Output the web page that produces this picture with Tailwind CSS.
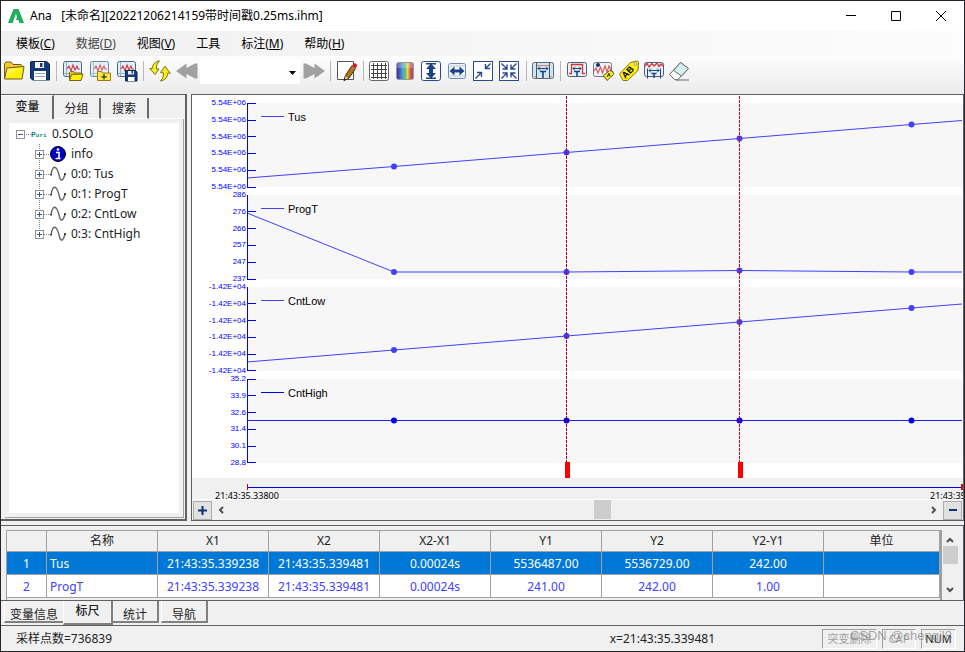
<!DOCTYPE html>
<html lang="zh-CN">
<head>
    <meta charset="UTF-8">
    <meta name="viewport" content="width=device-width, initial-scale=1.0">
    <title>Ana</title>
    <script src="https://cdn.jsdelivr.net/npm/@tailwindcss/browser@4"></script>
</head>
<body class="min-h-screen flex flex-col bg-[#f0f0f0] border border-[#24242a] text-[#222] text-xs font-['Noto_Sans','Noto_Sans_CJK_SC',sans-serif] overflow-x-hidden">

    <!-- Shared icon parts -->
    <svg width="0" height="0" class="absolute">
        <defs>
            <linearGradient id="rainbow">
                <stop offset="0" stop-color="#303080"/>
                <stop offset=".2" stop-color="#5058d0"/>
                <stop offset=".38" stop-color="#40b0c0"/>
                <stop offset=".52" stop-color="#60c070"/>
                <stop offset=".65" stop-color="#e8d850"/>
                <stop offset=".82" stop-color="#e05040"/>
                <stop offset="1" stop-color="#7050b0"/>
            </linearGradient>
            <linearGradient id="folderFill" x1="0" y1="0" x2="1" y2="1">
                <stop offset="0" stop-color="#fff9a0"/>
                <stop offset=".6" stop-color="#fff000"/>
            </linearGradient>
            <g id="miniChart">
                <rect x="1.5" y="1.5" width="18" height="15" rx="2" fill="#dff0f8" stroke="#4a6478"/>
                <path d="M4.500 2v14M2 13.500h17" stroke="#8fb4c8" fill="none"/>
                <path d="M5 9l2-3 2 5 2-6 2 5 2-4 1 3h2" stroke="#d04050" stroke-width="1.200" fill="none"/>
            </g>
            <g id="wave">
                <path d="M1 11C2 4 4 2 6 4s2.500 5 3.500 9S13 18 15 10" fill="none" stroke="#666" stroke-width="1.400"/>
                <path d="M1 10v1.500M15 9v2" stroke="#111" stroke-width="1.400"/>
            </g>
        </defs>
    </svg>

    <!-- Title bar -->
    <header class="h-[30px] shrink-0 bg-white flex items-center pl-[7px] pr-px text-black">
        <svg width="16" height="16" viewBox="0 0 16 16" class="mr-1.5">
            <path fill="#1fae5c" d="M5.500 1h5L16 15h-4.500l-1.200-3H8l1-2.500L8 5.500 5.500 12.500l-.6 2.500H0z"/>
        </svg>
        <h1>Ana &nbsp; [未命名][20221206214159带时间戳0.25ms.ihm]</h1>
        <div class="ml-auto flex h-full">
            <button aria-label="最小化" class="w-[45px] grid place-items-center"><svg width="10" height="10" stroke="#000"><path d="M0 4.500h10"/></svg></button>
            <button aria-label="最大化" class="w-[45px] grid place-items-center"><svg width="10" height="10" fill="none" stroke="#000"><path d="M.5.5h9v9h-9z"/></svg></button>
            <button aria-label="关闭" class="w-[45px] grid place-items-center"><svg width="10" height="10" stroke="#000"><path d="M0 0l10 10M10 0L0 10"/></svg></button>
        </div>
    </header>

    <!-- Menu -->
    <nav class="h-[25px] shrink-0 flex items-center gap-[21px] pl-[15px] text-black bg-linear-to-r from-[#f0f0f0] to-[#fcfcfc]">
        <button>模板(<u>C</u>)</button>
        <button class="text-[#444]">数据(<u>D</u>)</button>
        <button>视图(<u>V</u>)</button>
        <button>工具</button>
        <button>标注(<u>M</u>)</button>
        <button>帮助(<u>H</u>)</button>
    </nav>

    <!-- Toolbar -->
    <div class="h-[38px] shrink-0 flex items-start pt-[3px] bg-linear-to-b from-[#fdfdfd] to-[#ebebeb]">
        <button aria-label="打开" class="w-[25px] h-6 grid place-items-center">
            <svg width="22" height="20" viewBox="0 0 22 20" stroke="#6b5a20" stroke-linejoin="round">
                <path d="M1.500 17V2.500L3 1h5l2 2.500h8l1 1V8" fill="#f6c828"/>
                <path d="M1.500 18L4 7 21 5.500 19 18z" fill="url(#folderFill)"/>
            </svg>
        </button>
        <button aria-label="保存" class="w-[27px] h-6 grid place-items-center">
            <svg width="20" height="20" viewBox="0 0 20 20">
                <path d="M1 .5h15.500L19.500 3v16h-17L.5 17V1z" fill="#143a78" stroke="#0c2450"/>
                <path d="M5 1h9v6H5z" fill="#f4f4f4"/><path d="M10 2h2.500v4H10z" fill="#143a78"/>
                <path d="M4 10h12v9H4z" fill="#fff"/><path d="M5 12.500h10M5 15.500h10" stroke="#9aa" />
            </svg>
        </button>
        <i class="w-1.5 h-5 mt-0.5 grid justify-center"><i class="w-px bg-[#b8b8b8]"></i></i>
        <button aria-label="打开图表" class="w-[27px] h-6 grid place-items-center">
            <svg width="22" height="22" viewBox="0 0 22 22">
                <use href="#miniChart"/>
                <path d="M7.500 20.500v-8l1-1h3l1 1.500h6v2" fill="#f0c020" stroke="#7a6414"/>
                <path d="M7.500 20.500l2-6 11.500-.5-2 6.500z" fill="#fff000" stroke="#7a6414"/>
            </svg>
        </button>
        <button aria-label="添加图表" class="w-[27px] h-6 grid place-items-center">
            <svg width="22" height="22" viewBox="0 0 22 22">
                <use href="#miniChart" opacity=".8"/>
                <path d="M8.500 20.500v-9h4l1 1.500h8v7.500z" fill="#ffe840" stroke="#a07818"/>
                <path d="M15 14v5.500M12.200 16.800h5.600" stroke="#333" stroke-width="1.300"/>
            </svg>
        </button>
        <button aria-label="保存图表" class="w-[27px] h-6 grid place-items-center">
            <svg width="22" height="22" viewBox="0 0 22 22">
                <use href="#miniChart"/>
                <path d="M9.500 10.500h10l1.500 1.500v9H9.500z" fill="#143a78" stroke="#0c2450"/>
                <path d="M12 11h6v3.500h-6z" fill="#e8eef4"/><path d="M15.500 11h1.500v2.500h-1.500z" fill="#143a78"/>
                <path d="M12 17h6.500v4H12z" fill="#fff"/>
            </svg>
        </button>
        <i class="w-1.5 h-5 mt-0.5 grid justify-center"><i class="w-px bg-[#b8b8b8]"></i></i>
        <button aria-label="刷新" class="w-[27px] h-6 grid place-items-center">
            <svg width="22" height="22" viewBox="0 0 22 22" fill="#ffee10" stroke="#6a6218" stroke-width=".9" stroke-linejoin="round">
                <path d="M10.500 .8C5.500 2 3.500 5 3.300 8.500L.8 8.500 6 14.500 10 9 7.400 9C7.200 6 8 3.500 10.500 .8z"/>
                <path d="M11.500 21c5-1 7.200-3.800 7.200-8l2.600.3L16 6.300 11.500 12.500l2.800.3c.3 3-.3 5.400-2.800 8.200z"/>
            </svg>
        </button>
        <button aria-label="后退" class="w-[27px] h-6 grid place-items-center">
            <svg width="22" height="16" viewBox="0 0 22 16" fill="#a0a0a0"><path d="M0 8L10.500.5v4.500L19 .5h2.500v15H19L10.500 11v4.500z"/></svg>
        </button>
        <div class="relative w-[100px] h-[25px]">
            <select aria-label="视图" class="w-full h-full bg-white appearance-none"></select>
            <svg width="7" height="4" class="absolute right-1 top-3 pointer-events-none"><path d="M0 0h7L3.500 4z"/></svg>
        </div>
        <button aria-label="前进" class="w-[27px] h-6 grid place-items-center">
            <svg width="22" height="16" viewBox="0 0 22 16" fill="#a0a0a0"><path d="M22 8L11.500.5v4.500L3 .5H.5v15H3L11.500 11v4.500z"/></svg>
        </button>
        <i class="w-1.5 h-5 mt-0.5 grid justify-center"><i class="w-px bg-[#b8b8b8]"></i></i>
        <button aria-label="编辑" class="w-[27px] h-6 grid place-items-center">
            <svg width="22" height="22" viewBox="0 0 22 22">
                <path d="M1.500 1.500h16v18h-16z" fill="#fff" stroke="#555"/>
                <path d="M8 20.500l1.500-5L16 5.500l4 2.500-7 10z" fill="#b87818" stroke="#3a2408"/>
                <path d="M8 20.500l1.500-5 3.500 2.500z" fill="#f4dca0" stroke="#3a2408" stroke-width=".6"/>
                <path d="M8 20.500l.7-2 1.300 1z"/>
                <path d="M16 6l4 2.500" stroke="#70a0b0" stroke-width="2"/>
                <circle cx="18.800" cy="5.500" r="2.200" fill="#e81010"/>
            </svg>
        </button>
        <i class="w-1.5 h-5 mt-0.5 grid justify-center"><i class="w-px bg-[#b8b8b8]"></i></i>
        <button aria-label="网格" class="w-[26px] h-6 grid place-items-center">
            <svg width="20" height="20" viewBox="0 0 20 20" fill="none">
                <rect x=".5" y=".5" width="19" height="19" rx="2" fill="#fff" stroke="#666"/>
                <path d="M4.500 2v16M8.500 2v16M12.500 2v16M16.500 2v16M2 4.500h16M2 8.500h16M2 12.500h16M2 16.500h16" stroke="#444"/>
            </svg>
        </button>
        <button aria-label="颜色" class="w-[26px] h-6 grid place-items-center">
            <svg width="18" height="18" viewBox="0 0 18 18">
                <rect x=".5" y=".5" width="17" height="17" rx="2" fill="url(#rainbow)" stroke="#999"/>
                <path d="M1 1h16v5H1z" fill="#fff" opacity=".25"/>
            </svg>
        </button>
        <button aria-label="纵向缩放" class="w-[26px] h-6 grid place-items-center">
            <svg width="20" height="20" viewBox="0 0 20 20">
                <rect x=".5" y=".5" width="19" height="19" rx="2" fill="#fff" stroke="#284890"/>
                <path d="M5 2h10v1.500H5zM5 16.500h10V18H5zM10 2.500l5 5.500h-3v4h3L10 17.500 5 12h3V8H5z" fill="#1c4488"/>
            </svg>
        </button>
        <button aria-label="横向缩放" class="w-[26px] h-6 grid place-items-center">
            <svg width="18" height="18" viewBox="0 0 18 18">
                <rect x=".5" y="1.500" width="17" height="15" rx="2" fill="#fff" stroke="#7088b8"/>
                <path d="M1 2.500h16v3H1zM1 12.500h16v3H1z" fill="#d8e0ee"/>
                <path d="M1.500 9l5-4.500v3h5v-3l5 4.500-5 4.500v-3h-5v3z" fill="#1c4488"/>
            </svg>
        </button>
        <button aria-label="缩小" class="w-[26px] h-6 grid place-items-center">
            <svg width="20" height="20" viewBox="0 0 20 20" fill="none" stroke="#284890">
                <rect x=".5" y=".5" width="19" height="19" fill="#fff"/>
                <path d="M17.500 2.500l-5 5M12.500 3v4.500H17M2.500 17.500l6-6M4 11.500h4.500V16" stroke-width="1.400"/>
            </svg>
        </button>
        <button aria-label="全部适应" class="w-[26px] h-6 grid place-items-center">
            <svg width="20" height="20" viewBox="0 0 20 20" fill="none" stroke="#284890">
                <rect x=".5" y=".5" width="19" height="19" fill="#fff"/>
                <path d="M2.500 2.500l5.500 5.500M8 3.500V8H3.500M17.500 2.500L12 8M12 3.500V8h4.500M2.500 17.500L8 12M3.500 12H8v4.500M17.500 17.500L12 12M16.500 12H12v4.500" stroke-width="1.400"/>
            </svg>
        </button>
        <i class="w-2 h-5 mt-0.5 grid justify-center"><i class="w-px bg-[#b8b8b8]"></i></i>
        <button aria-label="标尺" class="w-[26px] h-6 grid place-items-center">
            <svg width="22" height="20" viewBox="0 0 22 20" fill="none">
                <rect x=".5" y="1.500" width="21" height="16" rx="2" fill="#cfe6ee" stroke="#5a6a78"/>
                <path d="M2 15.500h2.500V4.500h13v11H20" stroke="#e08080"/>
                <path d="M4.500 2v15M17.500 2v15" stroke="#456"/>
                <path d="M6 7.500h10M8 5.500l-2 2 2 2M14 5.500l2 2-2 2" stroke="#1c4488"/>
                <path d="M8 10.500h6M11 10.500V17" stroke="#1c4488" stroke-width="1.600"/>
            </svg>
        </button>
        <i class="w-2 h-5 mt-0.5 grid justify-center"><i class="w-px bg-[#b8b8b8]"></i></i>
        <button aria-label="脉宽" class="w-[26px] h-6 grid place-items-center">
            <svg width="20" height="20" viewBox="0 0 20 20" fill="none">
                <rect x=".5" y="1.500" width="19" height="14" rx="2" fill="#eaf4f8" stroke="#4a6080"/>
                <path d="M2 12.500h2.500V3.500h11v9H18" stroke="#e03030" stroke-width="1.300"/>
                <path d="M6 7.500h8M8 5.500l-2 2 2 2M12 5.500l2 2-2 2" stroke="#1c4488"/>
                <path d="M7 10.500h6M10 10.500v5" stroke="#1c4488" stroke-width="1.600"/>
            </svg>
        </button>
        <button aria-label="标记" class="w-[26px] h-6 grid place-items-center">
            <svg width="22" height="20" viewBox="0 0 22 20" fill="none">
                <rect x="1.500" y="1.500" width="18" height="14" rx="2" fill="#eaf4f8" stroke="#6a7a88"/>
                <path d="M2 10l2-3 2 5 2.500-6 2 6 2.500-7 2 6 2-6 2 4" stroke="#e05050" stroke-width="1.100"/>
                <circle cx="6" cy="4" r="2" fill="#102a80"/>
                <path d="M11.500 14.500l6-5 3.500 1 .5 3-6.500 6z" fill="#ffee10" stroke="#555"/>
                <path d="M15 16l2-4 1 3.500M15.500 14.500l2.500-.5" stroke="#222" stroke-width=".8"/>
            </svg>
        </button>
        <button aria-label="标签" class="w-[26px] h-6 grid place-items-center">
            <svg width="22" height="22" viewBox="0 0 22 22">
                <path d="M1.500 14L12.500 2.500l7-1.500 1 .8-.5 8.700L9.500 20.500H5z" fill="#ffee10" stroke="#807818" stroke-linejoin="round"/>
                <circle cx="17.500" cy="4" r="1.300" fill="#fff" stroke="#777" stroke-width=".7"/>
                <text x="4" y="17" transform="rotate(-45 8 14)" font-size="9" font-weight="700" font-family="Liberation Sans, sans-serif">AB</text>
            </svg>
        </button>
        <button aria-label="测量" class="w-6 h-6 grid place-items-center">
            <svg width="20" height="20" viewBox="0 0 20 20" fill="none">
                <rect x=".5" y="1.500" width="19" height="14" rx="2" fill="#eaf4f8" stroke="#4a6080"/>
                <path d="M1 5l2-2.500L5 6l3-3.500L10 5l3-3 2 3.500L17 3l2 2" stroke="#e03030" stroke-width="1.300"/>
                <path d="M3.500 7.500v10M16.500 7.500v10M5 9.500h10M7 7.500l-2 2 2 2M13 7.500l2 2-2 2" stroke="#1c4488"/>
                <path d="M7.500 12.500h5M10 12.500V17" stroke="#1c4488" stroke-width="1.600"/>
            </svg>
        </button>
        <button aria-label="清除" class="w-[26px] h-6 grid place-items-center">
            <svg width="22" height="20" viewBox="0 0 22 20" stroke="#666" stroke-linejoin="round">
                <path d="M1.500 13.500L12.500 1.500l8 6-11 11.500-3-.5z" fill="#fff"/>
                <path d="M5.500 9.500l7-8 8 6-7 7.500z" fill="#d4eef2"/>
                <path d="M8 19h13" fill="none"/>
            </svg>
        </button>
    </div>

    <!-- Middle: variable tree and plots -->
    <main class="flex-1 flex gap-1">

        <aside class="w-[186px] shrink-0 flex flex-col border-t border-[#606060] border-r-2 border-b-2">
            <div role="tablist" class="flex items-end h-6 text-center">
                <button role="tab" aria-selected="true" class="w-[53px] h-6 pl-0.5 pb-px font-medium border-r-2 border-t border-t-white border-[#696969]">变量</button>
                <button role="tab" class="w-[47px] h-[21px] pt-0.5 border-r-2 border-[#696969] border-b border-b-white">分组</button>
                <button role="tab" class="w-12 h-[21px] pt-0.5 border-r-2 border-[#696969] border-b border-b-white">搜索</button>
                <span class="flex-1 border-b border-white"></span>
            </div>
            <div class="flex-1 flex ml-1 mr-px mb-px border-r border-b border-[#a0a0a0]">
                <ul class="flex-1 m-1 bg-white leading-5 pt-px">
                    <li>
                        <div class="flex items-center h-5 pl-[7px]">
                            <svg width="36" height="20" class="shrink-0">
                                <rect x=".5" y="6.500" width="8" height="8" fill="#fff" stroke="#919191"/><path d="M2 10.500h5" stroke="#3c50a0"/>
                                <path d="M10 10.500h6" stroke="#888" stroke-dasharray="1 1"/>
                                <text x="15" y="13" font-size="8" font-weight="700" fill="#108888" font-family="Liberation Mono, monospace">P<tspan font-size="6">uri</tspan></text>
                            </svg>
                            0.SOLO
                        </div>
                        <ul>
                            <li class="flex items-center h-5 pl-[26px]">
                                <svg width="36" height="20" class="shrink-0">
                                    <path d="M4.500 0v20M9 10.500h6" stroke="#888" stroke-dasharray="1 1"/>
                                    <rect x=".5" y="6.500" width="8" height="8" fill="#fff" stroke="#919191"/><path d="M2 10.500h5M4.500 8v5" stroke="#3c50a0"/>
                                    <circle cx="23" cy="10" r="7.500" fill="#0000c8" stroke="#001"/>
                                    <path d="M21 8.500h3v5.500M20.500 14.500h5" stroke="#fff" stroke-width="1.600" fill="none"/><circle cx="23" cy="5.500" r="1.300" fill="#fff"/>
                                </svg>
                                info
                            </li>
                            <li class="flex items-center h-5 pl-[26px]">
                                <svg width="36" height="20" class="shrink-0">
                                    <path d="M4.500 0v20M9 10.500h6" stroke="#888" stroke-dasharray="1 1"/>
                                    <rect x=".5" y="6.500" width="8" height="8" fill="#fff" stroke="#919191"/><path d="M2 10.500h5M4.500 8v5" stroke="#3c50a0"/>
                                    <use href="#wave" x="15"/>
                                </svg>
                                0:0: Tus
                            </li>
                            <li class="flex items-center h-5 pl-[26px]">
                                <svg width="36" height="20" class="shrink-0">
                                    <path d="M4.500 0v20M9 10.500h6" stroke="#888" stroke-dasharray="1 1"/>
                                    <rect x=".5" y="6.500" width="8" height="8" fill="#fff" stroke="#919191"/><path d="M2 10.500h5M4.500 8v5" stroke="#3c50a0"/>
                                    <use href="#wave" x="15"/>
                                </svg>
                                0:1: ProgT
                            </li>
                            <li class="flex items-center h-5 pl-[26px]">
                                <svg width="36" height="20" class="shrink-0">
                                    <path d="M4.500 0v20M9 10.500h6" stroke="#888" stroke-dasharray="1 1"/>
                                    <rect x=".5" y="6.500" width="8" height="8" fill="#fff" stroke="#919191"/><path d="M2 10.500h5M4.500 8v5" stroke="#3c50a0"/>
                                    <use href="#wave" x="15"/>
                                </svg>
                                0:2: CntLow
                            </li>
                            <li class="flex items-center h-5 pl-[26px]">
                                <svg width="36" height="20" class="shrink-0">
                                    <path d="M4.500 0v10M9 10.500h6" stroke="#888" stroke-dasharray="1 1"/>
                                    <rect x=".5" y="6.500" width="8" height="8" fill="#fff" stroke="#919191"/><path d="M2 10.500h5M4.500 8v5" stroke="#3c50a0"/>
                                    <use href="#wave" x="15"/>
                                </svg>
                                0:3: CntHigh
                            </li>
                        </ul>
                    </li>
                </ul>
            </div>
        </aside>

        <section class="flex-1 min-w-0 flex flex-col border border-[#606060]">
            <!-- Plots -->
            <div class="relative flex-1 bg-white pt-1 pr-px font-['Liberation_Sans',sans-serif]">
                <div class="flex h-[92px]">
                    <div class="w-[55px] pr-px flex flex-col justify-between text-right text-[8px] leading-[8px] text-[#0000ff]">
                        <span>5.54E+06</span><span>5.54E+06</span><span>5.54E+06</span><span>5.54E+06</span><span>5.54E+06</span><span>5.54E+06</span>
                    </div>
                    <div class="relative flex-1 my-1 bg-[#f7f7f7]">
                        <svg class="w-full h-full" viewBox="0 0 715 84" preserveAspectRatio="none" fill="none" stroke="#4040ff">
                            <path d="M0 75L147 63.500 319.500 49.500 492.500 35.500 664.500 21.500 715 17.500" vector-effect="non-scaling-stroke"/>
                            <path d="M147 63.500h0M319.500 49.500h0M492.500 35.500h0M664.500 21.500h0" stroke-width="6" stroke-linecap="round" vector-effect="non-scaling-stroke"/>
                        </svg>
                        <svg class="absolute left-0 top-0 overflow-visible" width="40" height="84" fill="none" stroke="#0000ff">
                            <path d="M.5 0v85M0 .5h9M0 17.500h9M0 33.500h9M0 50.500h9M0 67.500h9M0 84.500h9"/>
                            <path d="M14 13.500h23" stroke="#4040ff"/>
                        </svg>
                        <span class="absolute left-[41px] top-1.5 text-[11px] leading-4 text-black">Tus</span>
                    </div>
                </div>
                <div class="flex h-[92px]">
                    <div class="w-[55px] pr-px flex flex-col justify-between text-right text-[8px] leading-[8px] text-[#0000ff]">
                        <span>286</span><span>276</span><span>266</span><span>257</span><span>247</span><span>237</span>
                    </div>
                    <div class="relative flex-1 my-1 bg-[#f7f7f7]">
                        <svg class="w-full h-full" viewBox="0 0 715 84" preserveAspectRatio="none" fill="none" stroke="#4040ff">
                            <path d="M0 18L147 77H319.500L492.500 75.500 664.500 77H715" vector-effect="non-scaling-stroke"/>
                            <path d="M147 77h0M319.500 77h0M492.500 75.500h0M664.500 77h0" stroke-width="6" stroke-linecap="round" vector-effect="non-scaling-stroke"/>
                        </svg>
                        <svg class="absolute left-0 top-0 overflow-visible" width="40" height="84" fill="none" stroke="#0000ff">
                            <path d="M.5 0v85M0 16.500h9M0 33.500h9M0 50.500h9M0 67.500h9M0 84.500h9"/>
                            <path d="M14 13.500h23" stroke="#4040ff"/>
                        </svg>
                        <span class="absolute left-[41px] top-1.5 text-[11px] leading-4 text-black">ProgT</span>
                    </div>
                </div>
                <div class="flex h-[92px]">
                    <div class="w-[55px] pr-px flex flex-col justify-between text-right text-[8px] leading-[8px] text-[#0000ff]">
                        <span>-1.42E+04</span><span>-1.42E+04</span><span>-1.42E+04</span><span>-1.42E+04</span><span>-1.42E+04</span><span>-1.42E+04</span>
                    </div>
                    <div class="relative flex-1 my-1 bg-[#f7f7f7]">
                        <svg class="w-full h-full" viewBox="0 0 715 84" preserveAspectRatio="none" fill="none" stroke="#4040ff">
                            <path d="M0 75L147 63 319.500 49 492.500 35 664.500 21 715 17" vector-effect="non-scaling-stroke"/>
                            <path d="M147 63h0M319.500 49h0M492.500 35h0M664.500 21h0" stroke-width="6" stroke-linecap="round" vector-effect="non-scaling-stroke"/>
                        </svg>
                        <svg class="absolute left-0 top-0 overflow-visible" width="40" height="84" fill="none" stroke="#0000ff">
                            <path d="M.5 0v84M0 16.500h9M0 33.500h9M0 50.500h9M0 67.500h9M0 83.500h9"/>
                            <path d="M14 13.500h23" stroke="#4040ff"/>
                        </svg>
                        <span class="absolute left-[41px] top-1.5 text-[11px] leading-4 text-black">CntLow</span>
                    </div>
                </div>
                <div class="flex h-[92px]">
                    <div class="w-[55px] pr-px flex flex-col justify-between text-right text-[8px] leading-[8px] text-[#0000ff]">
                        <span>35.2</span><span>33.9</span><span>32.6</span><span>31.4</span><span>30.1</span><span>28.8</span>
                    </div>
                    <div class="relative flex-1 my-1 bg-[#f7f7f7]">
                        <svg class="w-full h-full" viewBox="0 0 715 84" preserveAspectRatio="none" fill="none" stroke="#0000ff">
                            <path d="M0 41.500H715" stroke="#2020ff" vector-effect="non-scaling-stroke"/>
                            <path d="M147 41.500h0M319.500 41.500h0M492.500 41.500h0M664.500 41.500h0" stroke-width="6" stroke-linecap="round" vector-effect="non-scaling-stroke"/>
                        </svg>
                        <svg class="absolute left-0 top-0 overflow-visible" width="40" height="84" fill="none" stroke="#0000ff">
                            <path d="M.5 0v84M0 .5h9M0 16.500h9M0 33.500h9M0 50.500h9M0 67.500h9M0 83.500h9"/>
                            <path d="M14 13.500h23"/>
                        </svg>
                        <span class="absolute left-[41px] top-1.5 text-[11px] leading-4 text-black">CntHigh</span>
                    </div>
                </div>

                <!-- Cursors X1 and X2 -->
                <div class="absolute left-[55px] right-px inset-y-0 pointer-events-none">
                    <svg class="w-full h-full" stroke="#e00000" shape-rendering="crispEdges">
                        <line x1="44.750%" x2="44.750%" y1="1" y2="100%" stroke-dasharray="3 1" stroke="#a00018"/>
                        <line x1="68.950%" x2="68.950%" y1="1" y2="100%" stroke-dasharray="3 1"/>
                    </svg>
                    <i class="absolute bottom-0 left-[44.475%] w-[5px] h-4 bg-[#ff0000]"></i>
                    <i class="absolute bottom-0 left-[68.671%] w-[5px] h-4 bg-[#ff0000]"></i>
                </div>
            </div>

            <!-- Time axis -->
            <div class="h-[22px] pt-1.5 pl-[23px] text-[9px] leading-3 text-black border-b border-white overflow-hidden">
                <div class="ml-8 h-1.5 flex items-center border-l border-r-2 border-l-[#c00020] border-r-[#ff0000]"><i class="flex-1 h-px bg-[#0000e0]"></i></div>
                <div class="flex justify-between whitespace-nowrap"><span>21:43:35.33800</span><span class="w-[33px] overflow-hidden">21:43:35.33900</span></div>
            </div>

            <!-- Zoom and scroll -->
            <div class="h-5 flex items-center pr-px">
                <button aria-label="放大" class="w-[19px] h-[19px] ml-px grid place-items-center bg-[#e1e1e1] border border-[#adadad]"><svg width="9" height="9"><path d="M0 4.500h9M4.500 0v9" stroke="#103070" stroke-width="2"/></svg></button>
                <button aria-label="向左" class="w-[18px] h-5 grid place-items-center"><svg width="6" height="8" fill="none" stroke="#505050" stroke-width="2"><path d="M5 1L2 4l3 3"/></svg></button>
                <div class="flex-1 h-full"><i class="block w-[17px] h-[19px] ml-[52.500%] bg-[#cdcdcd]"></i></div>
                <button aria-label="向右" class="w-[19px] h-5 grid place-items-center"><svg width="6" height="8" fill="none" stroke="#505050" stroke-width="2"><path d="M1 1l3 3-3 3"/></svg></button>
                <button aria-label="缩小时间" class="w-[19px] h-[19px] grid place-items-center bg-[#e1e1e1] border border-[#adadad]"><svg width="8" height="2"><path d="M0 1h8" stroke="#103070" stroke-width="2"/></svg></button>
            </div>
        </section>
    </main>

    <!-- Cursor table -->
    <section class="mt-1 shrink-0 h-[76px] border-y border-r border-[#606060] pt-1 px-1 flex overflow-hidden">
        <div class="flex-1 ml-px border-t border-l border-r-2 border-[#a0a0a0] overflow-hidden">
            <table class="w-full table-fixed border-separate border-spacing-0 text-center leading-5 [&_td]:border-r [&_td]:border-b [&_th]:border-r [&_th]:border-b [&_td]:border-[#a0a0a0] [&_th]:border-[#a0a0a0] [&_td]:p-0 [&_td]:pt-0.5 [&_th]:p-0 [&_th]:font-normal">
                <colgroup>
                    <col class="w-10"><col class="w-[111px]"><col class="w-[111px]"><col class="w-[111px]"><col class="w-[111px]"><col class="w-[111px]"><col class="w-[111px]"><col class="w-[111px]"><col>
                </colgroup>
                <thead>
                    <tr class="h-[21px]"><th></th><th>名称</th><th>X1</th><th>X2</th><th>X2-X1</th><th>Y1</th><th>Y2</th><th>Y2-Y1</th><th>单位</th></tr>
                </thead>
                <tbody>
                    <tr class="h-[23px] bg-[#0078d7] text-white"><td>1</td><td class="text-left"><span class="pl-[3px]">Tus</span></td><td>21:43:35.339238</td><td>21:43:35.339481</td><td>0.00024s</td><td>5536487.00</td><td>5536729.00</td><td>242.00</td><td></td></tr>
                    <tr class="h-[23px] bg-white text-[#4040ff]"><td>2</td><td class="text-left"><span class="pl-[3px]">ProgT</span></td><td>21:43:35.339238</td><td>21:43:35.339481</td><td>0.00024s</td><td>241.00</td><td>242.00</td><td>1.00</td><td></td></tr>
                </tbody>
            </table>
        </div>
        <div class="w-4 mr-px flex flex-col items-center pt-1 pb-1">
            <button aria-label="向上" class="h-3 grid place-items-center"><svg width="8" height="6" fill="none" stroke="#505050" stroke-width="2"><path d="M1 5l3-3 3 3"/></svg></button>
            <i class="w-[15px] h-[18px] bg-[#cdcdcd]"></i>
            <button aria-label="向下" class="mt-auto h-3 grid place-items-center"><svg width="8" height="6" fill="none" stroke="#505050" stroke-width="2"><path d="M1 1l3 3 3-3"/></svg></button>
        </div>
    </section>

    <!-- Bottom tabs -->
    <div role="tablist" class="h-[25px] shrink-0 flex items-start pl-[3px] border-b border-[#606060] text-center">
        <button role="tab" class="w-[59px] h-[22px] pt-1.5 border-b-2 border-[#808080] border-l border-l-white">变量信息</button>
        <button role="tab" aria-selected="true" class="w-[50px] h-6 pb-0.5 font-medium border-b-2 border-r-2 border-[#808080] border-l border-l-white">标尺</button>
        <button role="tab" class="w-[46px] h-[22px] pt-1.5 border-b-2 border-r-2 border-[#808080]">统计</button>
        <button role="tab" class="w-[47px] ml-0.5 h-[22px] pt-1.5 border-b-2 border-r-2 border-[#808080] border-l border-l-white">导航</button>
    </div>

    <!-- Status bar -->
    <footer class="relative h-[25px] shrink-0 flex items-center pl-[15px] pr-2">
        <span>采样点数=736839</span>
        <span class="ml-auto mr-[107px]">x=21:43:35.339481</span>
        <div class="flex gap-[5px] text-center text-[11px] leading-[18px]">
            <span class="w-[55px] h-5 border border-[#a0a0a0] border-r-white border-b-white text-[#a0a0a0]">突变删除</span>
            <span class="w-[34px] h-5 border border-[#a0a0a0] border-r-white border-b-white text-[#a0a0a0]">CAP</span>
            <span class="w-[35px] h-5 border border-[#a0a0a0] border-r-white border-b-white">NUM</span>
        </div>
        <span class="absolute right-3 top-0.5 text-[13px] leading-4 text-[#808080]/70 font-['Liberation_Sans',sans-serif]">CSDN @chengjl8</span>
    </footer>
</body>
</html>
